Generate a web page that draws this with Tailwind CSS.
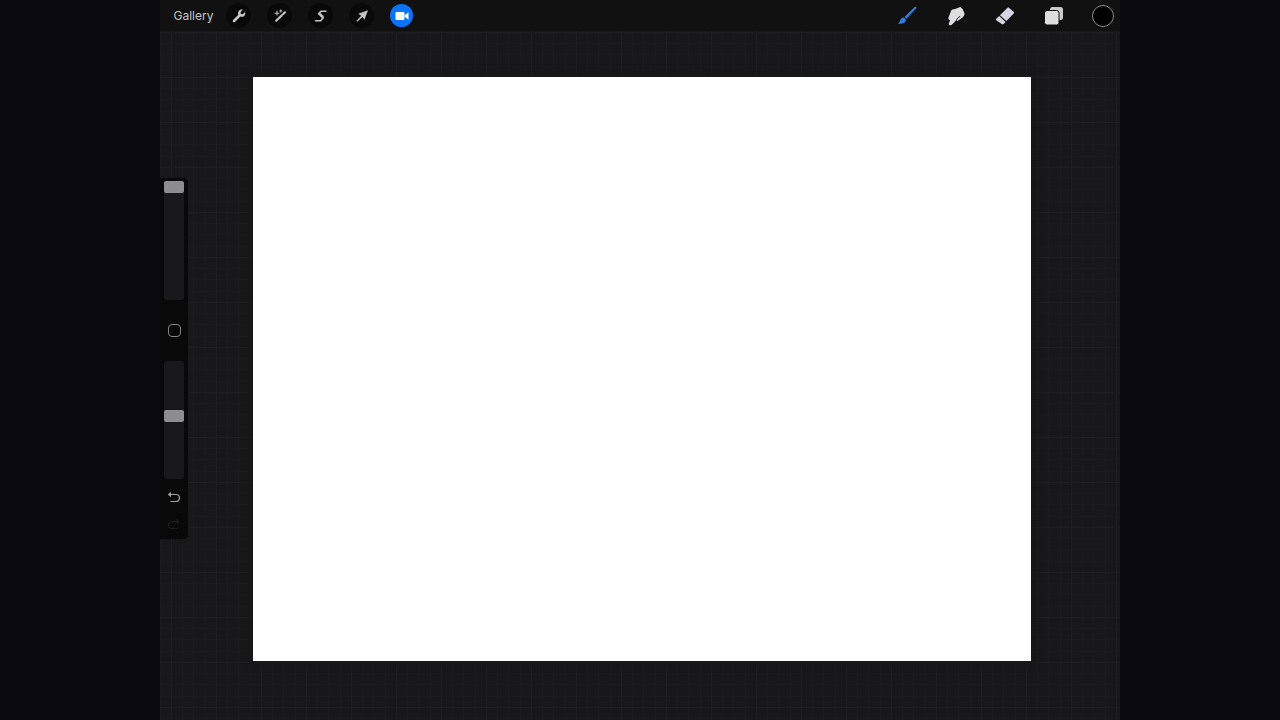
<!DOCTYPE html>
<html lang="en">
<head>
    <meta charset="UTF-8">
    <meta name="viewport" content="width=device-width, initial-scale=1.0">
    <title>Canvas</title>
    <!-- Tailwind CSS -->
    <script src="https://cdn.jsdelivr.net/npm/@tailwindcss/browser@4"></script>
</head>
<body class="bg-[#0b0a10] font-['Inter','Liberation_Sans',sans-serif]">

<div class="relative w-3/4 min-h-screen mx-auto flex flex-col bg-[#18181a] overflow-hidden">

    <!-- Background grid -->
    <svg class="absolute inset-0 w-full h-full" aria-hidden="true">
        <defs>
            <pattern id="grid" x="11" y="32" width="45" height="45" patternUnits="userSpaceOnUse">
                <path d="M11.5 0v45M22.5 0v45M34.5 0v45M0 11.5h45M0 22.5h45M0 34.5h45" stroke="#1b1b1d" fill="none"/>
                <path d="M.5 0v45M0 .5h45" stroke="#1f1f21" fill="none"/>
            </pattern>
        </defs>
        <rect width="100%" height="100%" fill="url(#grid)"/>
    </svg>

    <!-- Toolbar -->
    <header class="relative h-[31px] flex items-center justify-between pl-[13px] pr-[5px] bg-[#111112]">
        <nav class="flex items-center gap-4" aria-label="Menus">
            <button class="w-[41px] -mr-1 text-xs text-[#c4c4c6] whitespace-nowrap">Gallery</button>
            <button aria-label="Actions" class="size-[25px] rounded-full bg-[#09090a] flex items-center justify-center">
                <svg class="size-4" viewBox="0 0 16 16" fill="none">
                    <path d="M3 13 8.5 7.5" stroke="#c9c9cb" stroke-width="2.6" stroke-linecap="round"/>
                    <path d="M11.8 1.8 9.6 4l.3 1.900 1.900.3L14 4c.6 1.500.2 2.900-.8 3.900-1.100 1-2.600 1.200-3.900.7L7.200 6.600c-.5-1.300-.2-2.800.8-3.900 1-1 2.400-1.400 3.800-.9z" fill="#c9c9cb"/>
                </svg>
            </button>
            <button aria-label="Adjustments" class="size-[25px] rounded-full bg-[#09090a] flex items-center justify-center">
                <svg class="size-4" viewBox="0 0 16 16" fill="none" stroke="#c2c2c4">
                    <path d="M4.200 12.800 9.800 7.400M11.200 6 13 4.300" stroke-width="2.200" stroke-linecap="round"/>
                    <path d="M5 2.800v4.800M2.600 5.200h4.800M8.800 1.500v3M7.300 3h3" stroke-width="1.100"/>
                </svg>
            </button>
            <button aria-label="Selection" class="size-[25px] rounded-full bg-[#09090a] flex items-center justify-center">
                <svg class="size-4" viewBox="0 0 16 16" fill="none" stroke="#c2c2c4">
                    <path d="M13.500 3.200H8L5.800 5.400l4.400 4.400-2.500 2.900H2" stroke-width="1.600"/>
                    <path d="M6 5.400 10 9.200" stroke-width="2.600"/>
                </svg>
            </button>
            <button aria-label="Transform" class="size-[25px] rounded-full bg-[#09090a] flex items-center justify-center">
                <svg class="size-4" viewBox="0 0 16 16" fill="#c2c2c4">
                    <path d="M14 2.200 10.500 11.800 8.500 8.900 3.300 13.800 2.400 12.900 7.200 7.700 4.200 5.800z"/>
                </svg>
            </button>
            <button aria-label="Record" class="size-[23px] rounded-full bg-[#0a73f8] flex items-center justify-center">
                <svg class="size-4" viewBox="0 0 16 16" fill="#fff">
                    <rect x="1.500" y="4" width="9" height="8" rx="1.200"/>
                    <path d="M10.800 7.300 14.500 4.200v7.600L10.800 8.700z"/>
                </svg>
            </button>
        </nav>
        <nav class="flex items-center gap-6" aria-label="Tools">
            <button aria-label="Paint" class="size-[25px] flex items-center justify-center">
                <svg class="size-5" viewBox="0 0 20 20" fill="#2f7de4">
                    <path d="M19 .8c.6.6.5 1.100.1 1.600L9.500 12.800 7.500 10.900 17.600 1c.5-.4 1-.5 1.400-.2z"/>
                    <path d="M6.800 11.500 8.900 13.500c.1 2.700-2.300 4.700-8.100 4.400 1.700-.8 1.700-1.700 2.200-3.200.6-1.900 2-3.200 3.800-3.200z"/>
                </svg>
            </button>
            <button aria-label="Smudge" class="size-[25px] flex items-center justify-center">
                <svg class="size-5" viewBox="0 0 20 20">
                    <path d="M14.300.9 16.600 3l1.800 4c.6 2.200-1.200 4.200-3.300 5.600l-3.500 2.300-1.500-.3-4.600 4.300c-1.200 1-3.400 0-2.600-1.700l1.200-2.700c-1.400-.6-2.200-1.700-1.500-3.300l2.300-5.900C5.400 3.700 7 3.200 9 3z" fill="#dedee0"/>
                    <path d="M10.300 14.800c.5-1.700 1.600-3.300 3.900-4.500" fill="none" stroke="#111112"/>
                </svg>
            </button>
            <button aria-label="Erase" class="size-[25px] flex items-center justify-center">
                <svg class="size-5" viewBox="0 0 20 20" fill="#d6d4e2">
                    <path d="M12.300 1.900c.7-.6 1.300-.5 1.900 0l4.400 3.900c.6.6.6 1.200.1 1.800l-7.300 7.500L4.900 9.300z"/>
                    <path d="M4.200 10.100 10.600 15.900 8.600 18c-.6.6-1.300.6-1.900.1L1.300 14.300c-.5-.5-.5-1 0-1.500z"/>
                </svg>
            </button>
            <button aria-label="Layers" class="size-[25px] flex items-center justify-center">
                <svg class="size-5" viewBox="0 0 20 20">
                    <rect x="6" y="1" width="13" height="13" rx="2.500" fill="#c9c9cb"/>
                    <rect x=".5" y="4.500" width="14.500" height="14.500" rx="2.500" fill="#dededf" stroke="#111112"/>
                </svg>
            </button>
            <button aria-label="Colour" class="size-[25px] flex items-center justify-center">
                <span class="size-[22px] rounded-full bg-black border border-[#8c8c8e]"></span>
            </button>
        </nav>
    </header>

    <main class="relative flex-1 flex">
        <!-- Sidebar -->
        <aside class="self-center w-7 mb-[34px] pt-[3px] pb-1 flex flex-col items-center bg-[#09090a] rounded-r-[4px]">
            <input type="range" aria-label="Brush size" min="0" max="100" value="100" class="appearance-none [writing-mode:vertical-lr] [direction:rtl] w-5 h-[119px] bg-[#19191b] rounded-[3px] [&::-webkit-slider-thumb]:appearance-none [&::-webkit-slider-thumb]:w-5 [&::-webkit-slider-thumb]:h-3 [&::-webkit-slider-thumb]:rounded-[2px] [&::-webkit-slider-thumb]:bg-[#8d8d90]">
            <button aria-label="Modify" class="h-[61px] w-full flex items-center justify-center">
                <span class="size-[13px] rounded-[4px] border border-[#858587]"></span>
            </button>
            <input type="range" aria-label="Brush opacity" min="0" max="100" value="54" class="appearance-none [writing-mode:vertical-lr] [direction:rtl] w-5 h-[118px] bg-[#19191b] rounded-[3px] [&::-webkit-slider-thumb]:appearance-none [&::-webkit-slider-thumb]:w-5 [&::-webkit-slider-thumb]:h-3 [&::-webkit-slider-thumb]:rounded-[2px] [&::-webkit-slider-thumb]:bg-[#8d8d90]">
            <button aria-label="Undo" class="mt-1 size-7 flex items-center justify-center">
                <svg class="size-4" viewBox="0 0 16 16" fill="none" stroke="#a2a2a4" stroke-width="1.200">
                    <path d="M4.500 5.500H10a3.500 3.500 0 0 1 0 7H4.500"/>
                    <path d="M5 2.800v5.400L1.800 5.500z" fill="#a2a2a4" stroke="none"/>
                </svg>
            </button>
            <button aria-label="Redo" class="h-6 w-7 flex items-center justify-center" disabled>
                <svg class="size-4" viewBox="0 0 16 16" fill="none" stroke="#1c1c1e" stroke-width="1.200">
                    <path d="M11 6.500H6a3.500 3.500 0 0 0 0 7H11"/>
                    <path d="M10.500 3.800v5.400L13.700 6.500z" fill="#1c1c1e" stroke="none"/>
                </svg>
            </button>
        </aside>

        <!-- Drawing surface -->
        <section aria-label="Canvas" class="flex-1 mt-[46px] mb-[59px] ml-[65px] mr-[89px] bg-white shadow-[0_0_6px_4px_#18181a]"></section>
    </main>
</div>

</body>
</html>
